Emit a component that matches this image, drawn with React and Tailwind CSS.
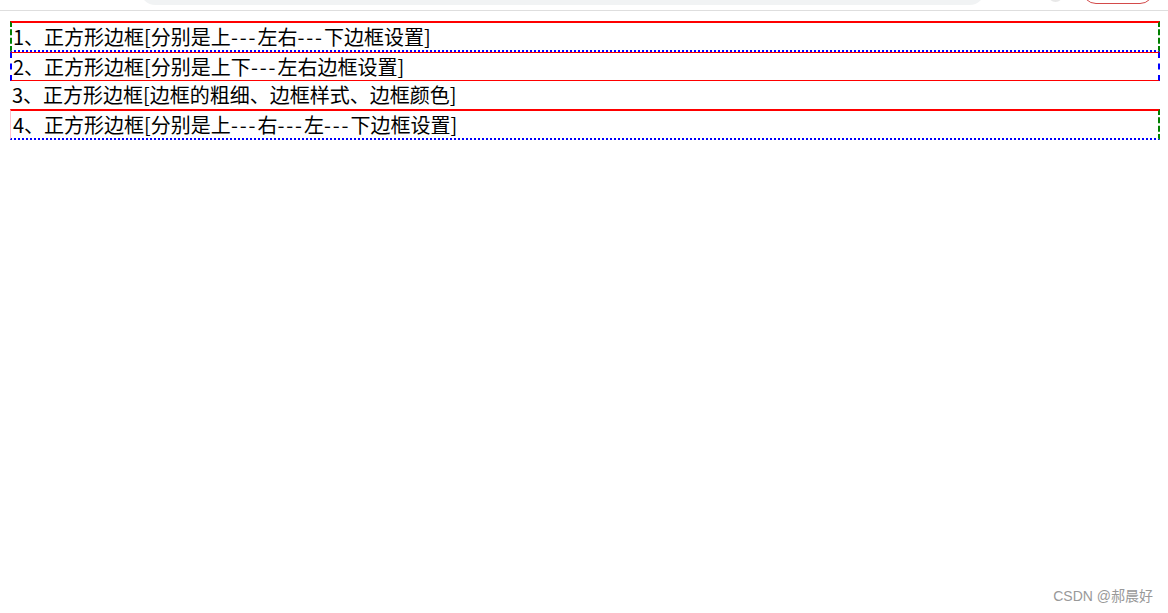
export default function App() {
  const font = { fontFamily: '"Microsoft YaHei", "Noto Sans CJK SC", "Noto Sans", sans-serif' };
  const Dash = () => <span className="tracking-[1.9px]">---</span>;

  return (
    <div className="relative min-h-[613px] bg-white text-black" style={font}>
      {/* cut-off browser toolbar */}
      <div className="flex h-[11px] items-start overflow-hidden border-b border-[#dedede]">
        <div className="ml-[140px] -mt-[26px] h-[31px] w-[845px] rounded-[16px] bg-[#f1f3f4]" />
        <div className="ml-[63px] -mt-[14px] h-[16px] w-[15px] rounded-full bg-[#e8e8e8]" />
        <div className="ml-[19px] -mt-[26px] h-[30px] w-[72px] rounded-[14px] border border-[#d34a4a]" />
      </div>

      <div className="ml-[10px] mr-[8px] mt-[10px] text-[20px] leading-[27px]">
        <div className="border-t-2 border-t-[#ff0000] [border-top-style:solid] border-x-2 border-x-[#008000] [border-left-style:dashed] [border-right-style:dashed] border-b-2 border-b-[#0000ff] [border-bottom-style:dotted] pl-[1px]">
          1、正方形边框[分别是上<Dash />左右<Dash />下边框设置]
        </div>
        <div className="border-y border-y-[#ff0000] [border-top-style:solid] [border-bottom-style:solid] border-x-2 border-x-[#0000ff] [border-left-style:dashed] [border-right-style:dashed] pl-[1px]">
          2、正方形边框[分别是上下<Dash />左右边框设置]
        </div>
        <div className="h-[28px] pl-[2px]">
          3、正方形边框[边框的粗细、边框样式、边框颜色]
        </div>
        <div className="border-t-2 border-t-[#ff0000] [border-top-style:solid] border-r-2 border-r-[#008000] [border-right-style:dashed] border-b-2 border-b-[#0000ff] [border-bottom-style:dotted] border-l border-l-[#ffc0cb] [border-left-style:solid] pl-[2px]">
          4、正方形边框[分别是上<Dash />右<Dash />左<Dash />下边框设置]
        </div>
      </div>

      <div className="absolute bottom-[8px] right-[15px] text-[14px] leading-[18px] text-[#999999]" style={{ fontFamily: '"Liberation Sans", "Noto Sans CJK SC", sans-serif' }}>
        CSDN @郝晨好
      </div>
    </div>
  );
}
